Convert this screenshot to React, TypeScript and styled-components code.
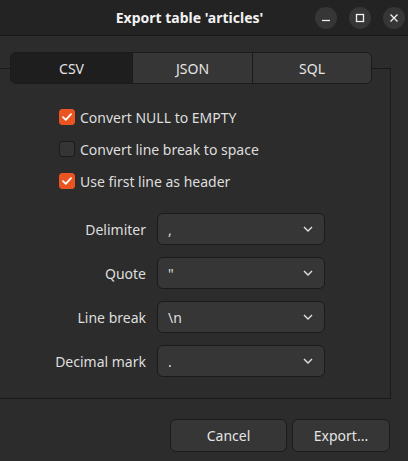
import { Fragment } from 'react';
import { createGlobalStyle, styled } from 'styled-components';

const GlobalStyle = createGlobalStyle`
  html, body { margin: 0; padding: 0; background: #2c2c2c; }
  body {
    font-family: "Noto Sans", "Open Sans", sans-serif;
    font-size: 14px;
    color: #dedede;
  }
`;

const Window = styled.div`
  width: 408px;
  height: 461px;
  display: flex;
  flex-direction: column;
  overflow: hidden;
  background: #2c2c2c;
`;

const TitleBar = styled.div`
  height: 35px;
  border-bottom: 1px solid #171717;
  background: #232323;
  display: flex;
  align-items: center;
  padding: 0 3px 0 64px;
`;

const Title = styled.div`
  flex: 1;
  text-align: center;
  font-weight: 700;
  color: #f2f2f2;
  font-size: 14px;
`;

const Controls = styled.div`
  display: flex;
  gap: 12px;
`;

const RoundButton = styled.div`
  width: 22px;
  height: 22px;
  border-radius: 50%;
  background: #363636;
  display: flex;
  align-items: center;
  justify-content: center;
`;

const TabWidget = styled.div`
  margin-top: 16px;
  display: flex;
  flex-direction: column;
`;

const TabBar = styled.div`
  position: relative;
  z-index: 1;
  margin-left: 10px;
  width: 362px;
  height: 32px;
  display: grid;
  grid-template-columns: 121px 120px 1fr;
  border: 1px solid #1b1b1b;
  border-radius: 6px;
  overflow: hidden;
  box-sizing: border-box;
`;

const Tab = styled.div<{ $active?: boolean }>`
  display: flex;
  align-items: center;
  justify-content: center;
  background: ${({ $active }) => ($active ? '#1e1e1e' : '#363636')};
  color: #e4e4e4;
  & + & { border-left: 1px solid #1b1b1b; }
`;

const Panel = styled.div`
  margin-top: -16px;
  margin-left: -2px;
  width: 393px;
  box-sizing: border-box;
  border: 1px solid #1a1a1a;
  padding: 32px 0 21px;
`;

const Checks = styled.div`
  padding-left: 60px;
  display: flex;
  flex-direction: column;
`;

const CheckRow = styled.label`
  height: 32px;
  display: flex;
  align-items: center;
  gap: 5px;
`;

const Box = styled.span<{ $checked?: boolean }>`
  width: 16px;
  height: 16px;
  box-sizing: border-box;
  border-radius: 3px;
  display: flex;
  align-items: center;
  justify-content: center;
  background: ${({ $checked }) => ($checked ? '#e95420' : '#353535')};
  border: 1px solid ${({ $checked }) => ($checked ? '#e95420' : '#1b1b1b')};
`;

const Form = styled.div`
  margin-top: 16px;
  display: grid;
  grid-template-columns: 147px 168px;
  column-gap: 11px;
  row-gap: 12px;
  align-items: center;
`;

const Label = styled.div`
  justify-self: end;
`;

const Combo = styled.div`
  height: 32px;
  box-sizing: border-box;
  border: 1px solid #1b1b1b;
  border-radius: 6px;
  background: #363636;
  display: flex;
  align-items: center;
  justify-content: space-between;
  padding: 0 11px 0 10px;
`;

const Footer = styled.div`
  margin-top: 20px;
  padding-right: 18px;
  display: flex;
  justify-content: flex-end;
  gap: 5px;
`;

const Button = styled.div<{ $width: number }>`
  width: ${({ $width }) => $width}px;
  height: 33px;
  box-sizing: border-box;
  border: 1px solid #1b1b1b;
  border-radius: 6px;
  background: #363636;
  display: flex;
  align-items: center;
  justify-content: center;
  color: #e4e4e4;
`;

const Check = () => (
  <svg width="10" height="8" viewBox="0 0 10 8">
    <path d="M1 4.2 L3.8 6.8 L9 1.2" fill="none" stroke="#fff" strokeWidth="1.8" strokeLinecap="round" strokeLinejoin="round" />
  </svg>
);

const Chevron = () => (
  <svg width="10" height="6" viewBox="0 0 10 6">
    <path d="M1 1 L5 5 L9 1" fill="none" stroke="#e0e0e0" strokeWidth="1.4" />
  </svg>
);

const options = [
  { label: 'Convert NULL to EMPTY', checked: true },
  { label: 'Convert line break to space', checked: false },
  { label: 'Use first line as header', checked: true },
];

const fields = [
  { label: 'Delimiter', value: ',' },
  { label: 'Quote', value: '"' },
  { label: 'Line break', value: '\\n' },
  { label: 'Decimal mark', value: '.' },
];

export default function App() {
  return (
    <Window>
      <GlobalStyle />
      <TitleBar>
        <Title>Export table 'articles'</Title>
        <Controls>
          <RoundButton>
            <svg width="10" height="10" viewBox="0 0 10 10">
              <path d="M1 7.5 H9" stroke="#f0f0f0" strokeWidth="1.3" />
            </svg>
          </RoundButton>
          <RoundButton>
            <svg width="10" height="10" viewBox="0 0 10 10">
              <rect x="1.5" y="1.5" width="7" height="7" fill="none" stroke="#f0f0f0" strokeWidth="1.3" />
            </svg>
          </RoundButton>
          <RoundButton>
            <svg width="10" height="10" viewBox="0 0 10 10">
              <path d="M1.5 1.5 L8.5 8.5 M8.5 1.5 L1.5 8.5" stroke="#f0f0f0" strokeWidth="1.3" />
            </svg>
          </RoundButton>
        </Controls>
      </TitleBar>
      <TabWidget>
        <TabBar>
          <Tab $active>CSV</Tab>
          <Tab>JSON</Tab>
          <Tab>SQL</Tab>
        </TabBar>
        <Panel>
          <Checks>
            {options.map((o) => (
              <CheckRow key={o.label}>
                <Box $checked={o.checked}>{o.checked && <Check />}</Box>
                {o.label}
              </CheckRow>
            ))}
          </Checks>
          <Form>
            {fields.map((f) => (
              <Fragment key={f.label}>
                <Label>{f.label}</Label>
                <Combo>
                  <span>{f.value}</span>
                  <Chevron />
                </Combo>
              </Fragment>
            ))}
          </Form>
        </Panel>
      </TabWidget>
      <Footer>
        <Button $width={117}>Cancel</Button>
        <Button $width={98}>Export...</Button>
      </Footer>
    </Window>
  );
}
